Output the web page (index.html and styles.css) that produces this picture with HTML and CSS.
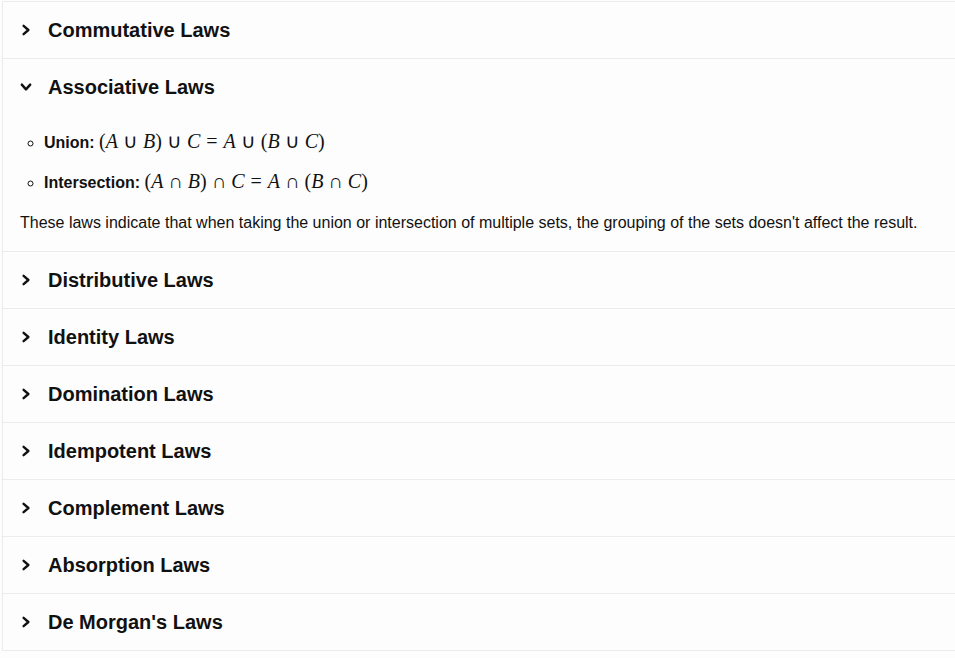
FILE: index.html
```html
<!DOCTYPE html>
<html>
<head>
<meta charset="utf-8">
<link rel="stylesheet" href="styles.css">
</head>
<body>
<div class="accordion">
  <div class="item">
    <div class="header"><svg class="chev" viewBox="0 0 10 10"><path d="M3 1.5 L7 5 L3 8.5"/></svg><span>Commutative Laws</span></div>
  </div>
  <div class="item">
    <div class="header"><svg class="chev" viewBox="0 0 10 10"><path d="M1.5 3 L5 7 L8.5 3"/></svg><span>Associative Laws</span></div>
    <div class="content">
      <ul>
        <li><b>Union:</b> <span class="math">(<i>A</i><span class="bin">∪</span><i>B</i>)<span class="bin">∪</span><i>C</i><span class="rel">=</span><i>A</i><span class="bin">∪</span>(<i>B</i><span class="bin">∪</span><i>C</i>)</span></li>
        <li><b>Intersection:</b> <span class="math">(<i>A</i><span class="bin">∩</span><i>B</i>)<span class="bin">∩</span><i>C</i><span class="rel">=</span><i>A</i><span class="bin">∩</span>(<i>B</i><span class="bin">∩</span><i>C</i>)</span></li>
      </ul>
      <p>These laws indicate that when taking the union or intersection of multiple sets, the grouping of the sets doesn't affect the result.</p>
    </div>
  </div>
  <div class="item">
    <div class="header"><svg class="chev" viewBox="0 0 10 10"><path d="M3 1.5 L7 5 L3 8.5"/></svg><span>Distributive Laws</span></div>
  </div>
  <div class="item">
    <div class="header"><svg class="chev" viewBox="0 0 10 10"><path d="M3 1.5 L7 5 L3 8.5"/></svg><span>Identity Laws</span></div>
  </div>
  <div class="item">
    <div class="header"><svg class="chev" viewBox="0 0 10 10"><path d="M3 1.5 L7 5 L3 8.5"/></svg><span>Domination Laws</span></div>
  </div>
  <div class="item">
    <div class="header"><svg class="chev" viewBox="0 0 10 10"><path d="M3 1.5 L7 5 L3 8.5"/></svg><span>Idempotent Laws</span></div>
  </div>
  <div class="item">
    <div class="header"><svg class="chev" viewBox="0 0 10 10"><path d="M3 1.5 L7 5 L3 8.5"/></svg><span>Complement Laws</span></div>
  </div>
  <div class="item">
    <div class="header"><svg class="chev" viewBox="0 0 10 10"><path d="M3 1.5 L7 5 L3 8.5"/></svg><span>Absorption Laws</span></div>
  </div>
  <div class="item">
    <div class="header"><svg class="chev" viewBox="0 0 10 10"><path d="M3 1.5 L7 5 L3 8.5"/></svg><span>De Morgan's Laws</span></div>
  </div>
</div>
</body>
</html>
```
FILE: styles.css
```css
html, body {
  margin: 0;
  padding: 0;
  background: #fdfdfd;
  font-family: "Liberation Sans", Arial, sans-serif;
  color: #111;
}
.accordion {
  margin: 1px 0 0 2px;
  border-left: 1px solid #ececec;
}
.item {
  border-top: 1px solid #ececec;
}
.item:last-child {
  border-bottom: 1px solid #ececec;
}
.header {
  height: 56px;
  display: flex;
  align-items: center;
  padding-left: 17px;
  font-size: 20px;
  font-weight: bold;
  color: #111;
}
.chev {
  width: 12px;
  height: 12px;
  margin-right: 16px;
  fill: none;
  stroke: #111;
  stroke-width: 2;
  stroke-linecap: round;
  stroke-linejoin: round;
}
.content {
  padding: 12px 17px 18px 17px;
}
.content ul {
  list-style: circle;
  margin: 0;
  padding-left: 24px;
}
.content li {
  font-size: 16px;
  line-height: 28px;
  margin-bottom: 10px;
}
.content li:last-child {
  margin-bottom: 0;
}
.content li b {
  font-weight: bold;
}
.math {
  font-family: "Liberation Serif", "Times New Roman", serif;
  font-size: 20px;
  color: #111;
}
.math i {
  font-style: italic;
}
.bin {
  padding: 0 5px;
  font-size: 20px;
}
.rel {
  padding: 0 6px;
}
.content p {
  margin: 16px 0 0 0;
  font-size: 16px;
  line-height: 20px;
}
```
